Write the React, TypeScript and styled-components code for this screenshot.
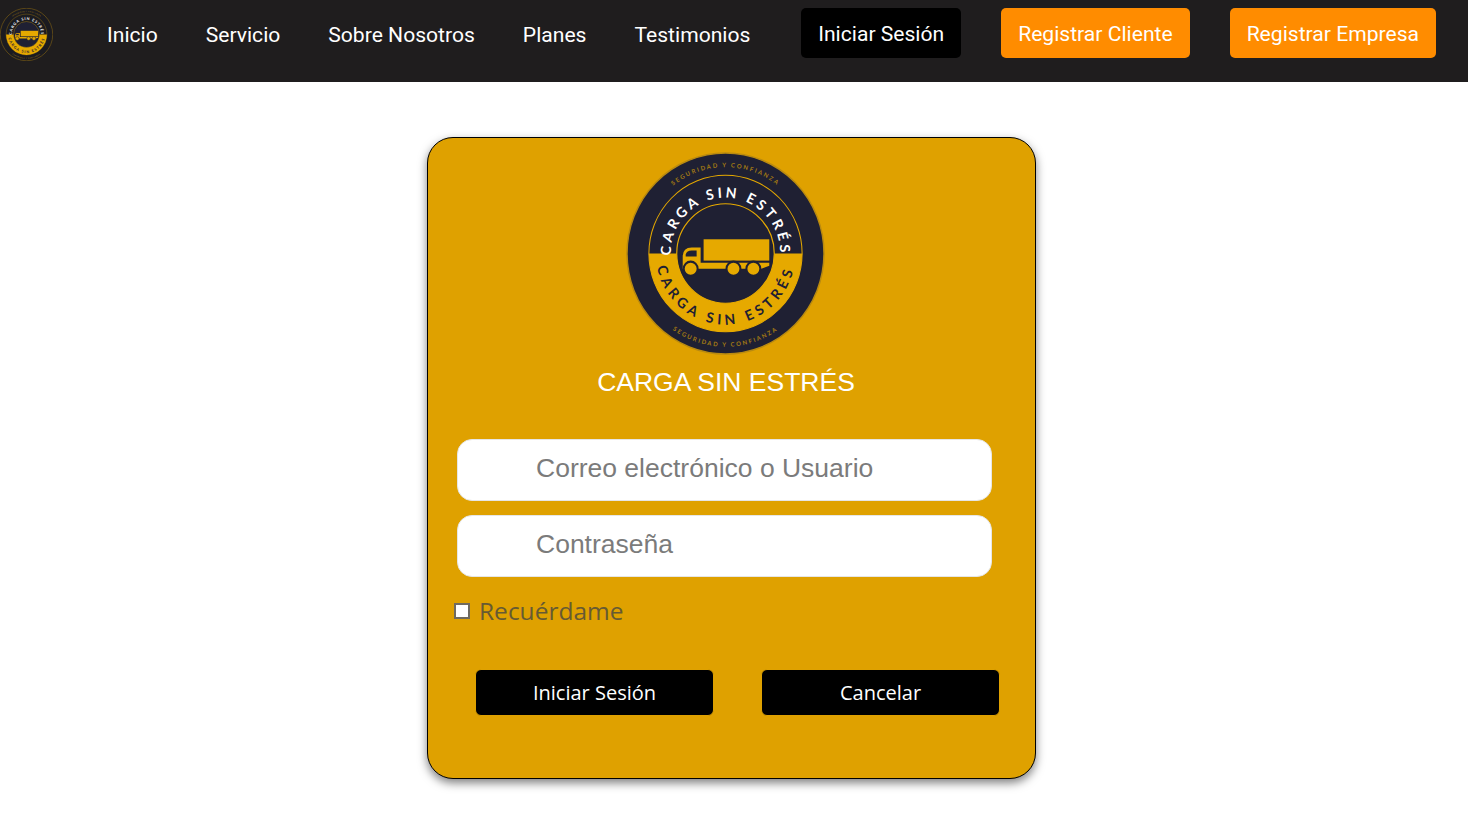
import { useId } from "react";
import styled, { createGlobalStyle } from "styled-components";

const GlobalStyle = createGlobalStyle`
  * {
    box-sizing: border-box;
  }
  html,
  body {
    margin: 0;
    background: #ffffff;
    font-family: "Liberation Sans", Arial, sans-serif;
  }
`;

const LogoMark = ({ width, height, outerFill = "#1f2033" }: { width: number; height: number; outerFill?: string }) => {
  const id = useId();
  return (
    <svg
      width={width}
      height={height}
      viewBox="0 0 200 200"
      preserveAspectRatio="none"
      style={{ display: "block", flexShrink: 0 }}
    >
      <defs>
        <path id={`${id}top`} d="M 45 100 A 55 55 0 0 1 155 100" />
        <path id={`${id}bottom`} d="M 30 100 A 70 70 0 0 0 170 100" />
        <path id={`${id}outerTop`} d="M 15 100 A 85 85 0 0 1 185 100" />
        <path id={`${id}outerBottom`} d="M 8 100 A 92 92 0 0 0 192 100" />
      </defs>
      <circle cx="100" cy="100" r="99" fill={outerFill} stroke="#b98a10" strokeWidth="1.5" />
      <path d="M 23 100 A 77 77 0 0 0 177 100 Z" fill="#e6a900" />
      <circle cx="100" cy="100" r="77" fill="none" stroke="#e6a900" strokeWidth="1" />
      <circle cx="100" cy="100" r="49" fill="#1f2033" stroke="#e6a900" strokeWidth="1.2" />
      <rect x="78" y="86" width="66" height="21" fill="#e6a900" />
      <path
        d="M 57 115 V 103 Q 57 94 66 94 H 75 V 109 H 144 V 112 L 136 115 H 82 Z"
        fill="#e6a900"
      />
      <path d="M 60 101 Q 61 97 66 97 H 71 V 103 H 60 Z" fill="#1f2033" />
      <g fill="#e6a900" stroke="#1f2033" strokeWidth="2">
        <circle cx="65" cy="115" r="7" />
        <circle cx="108" cy="115" r="7" />
        <circle cx="128" cy="115" r="7" />
      </g>
      <text fill="#ffffff" fontFamily="Lato, sans-serif" fontSize="14" fontWeight="700" letterSpacing="3.2" textAnchor="middle">
        <textPath href={`#${id}top`} startOffset="50%">
          CARGA SIN ESTRÉS
        </textPath>
      </text>
      <text fill="#1f2033" fontFamily="Lato, sans-serif" fontSize="14" fontWeight="700" letterSpacing="4.2" textAnchor="middle">
        <textPath href={`#${id}bottom`} startOffset="50%">
          CARGA SIN ESTRÉS
        </textPath>
      </text>
      <text fill="#a67c12" fontFamily="Lato, sans-serif" fontSize="6" fontWeight="700" letterSpacing="1.8" textAnchor="middle">
        <textPath href={`#${id}outerTop`} startOffset="50%">
          SEGURIDAD Y CONFIANZA
        </textPath>
      </text>
      <text fill="#a67c12" fontFamily="Lato, sans-serif" fontSize="6" fontWeight="700" letterSpacing="1.8" textAnchor="middle">
        <textPath href={`#${id}outerBottom`} startOffset="50%">
          SEGURIDAD Y CONFIANZA
        </textPath>
      </text>
    </svg>
  );
};

const App = () => {
  return (
    <>
      <GlobalStyle />
      <Header>
        <LogoMark width={53} height={53} outerFill="#1b1b20" />
        <NavLinks>
          <NavLink href="#">Inicio</NavLink>
          <NavLink href="#">Servicio</NavLink>
          <NavLink href="#">Sobre Nosotros</NavLink>
          <NavLink href="#">Planes</NavLink>
          <NavLink href="#">Testimonios</NavLink>
        </NavLinks>
        <NavActions>
          <NavButton>Iniciar Sesión</NavButton>
          <NavButton $accent>Registrar Cliente</NavButton>
          <NavButton $accent>Registrar Empresa</NavButton>
        </NavActions>
      </Header>

      <Main>
        <Card>
          <LogoSlot>
            <LogoMark width={199} height={203} />
          </LogoSlot>
          <Title>CARGA SIN ESTRÉS</Title>
          <Fields>
            <TextField type="text" placeholder="Correo electrónico o Usuario" />
            <TextField type="password" placeholder="Contraseña" />
          </Fields>
          <Remember>
            <Check type="checkbox" />
            Recuérdame
          </Remember>
          <Actions>
            <FormButton>Iniciar Sesión</FormButton>
            <FormButton>Cancelar</FormButton>
          </Actions>
        </Card>
      </Main>
    </>
  );
};

export default App;

const Header = styled.header`
  display: flex;
  align-items: flex-start;
  height: 82px;
  padding: 8px 32px 0 0;
  background: #1f1d1e;
`;

const NavLinks = styled.nav`
  display: flex;
  align-items: center;
  gap: 48px;
  height: 52px;
  margin-left: 54px;
`;

const NavLink = styled.a`
  color: #ffffff;
  font-family: Roboto, sans-serif;
  font-size: 21.1px;
  text-decoration: none;
  white-space: nowrap;
`;

const NavActions = styled.div`
  display: flex;
  gap: 40px;
  margin-left: auto;
`;

const NavButton = styled.button<{ $accent?: boolean }>`
  height: 50px;
  padding: 0 17px;
  border: none;
  border-radius: 5px;
  background: ${(p) => (p.$accent ? "#ff8c00" : "#000000")};
  color: #ffffff;
  font-family: Roboto, sans-serif;
  font-size: 21.1px;
  white-space: nowrap;
`;

const Main = styled.main`
  display: flex;
  justify-content: center;
  min-height: 738px;
  padding: 55px 5px 0 0;
`;

const Card = styled.section`
  display: flex;
  flex-direction: column;
  align-items: flex-start;
  width: 609px;
  height: 642px;
  padding-top: 14px;
  border: 1px solid #000000;
  border-radius: 26px;
  background: #dfa100;
  box-shadow: 0 4px 10px rgba(0, 0, 0, 0.5);
`;

const LogoSlot = styled.div`
  margin-left: 198px;
`;

const Title = styled.h1`
  align-self: center;
  margin: 12px 11px 0 0;
  color: #ffffff;
  font-size: 26.5px;
  font-weight: 400;
  line-height: 30px;
  white-space: nowrap;
`;

const Fields = styled.div`
  display: flex;
  flex-direction: column;
  gap: 14px;
  width: 535px;
  margin: 42px 0 0 29px;
`;

const TextField = styled.input`
  width: 100%;
  height: 62px;
  padding: 0 0 3px 78px;
  border: 1px solid #e6e6e6;
  border-radius: 15px;
  outline: none;
  background: #ffffff;
  font-family: "Liberation Sans", Arial, sans-serif;
  font-size: 26.5px;

  &::placeholder {
    color: #7b7b7b;
    opacity: 1;
  }
`;

const Remember = styled.label`
  display: flex;
  align-items: center;
  gap: 9px;
  margin: 16px 0 0 26px;
  color: #665a33;
  font-family: "Open Sans", sans-serif;
  font-size: 24.5px;
  line-height: 36px;
`;

const Check = styled.input`
  appearance: none;
  width: 16px;
  height: 16px;
  margin: 0;
  border: 2px solid #6f6a60;
  background: #ffffff;
`;

const Actions = styled.div`
  display: flex;
  justify-content: space-between;
  width: 525px;
  margin: 40px 0 0 47px;
`;

const FormButton = styled.button`
  width: 239px;
  height: 47px;
  border: 1px solid #dfa100;
  border-radius: 6px;
  background: #000000;
  color: #ffffff;
  font-family: "Open Sans", sans-serif;
  font-size: 20px;
`;
